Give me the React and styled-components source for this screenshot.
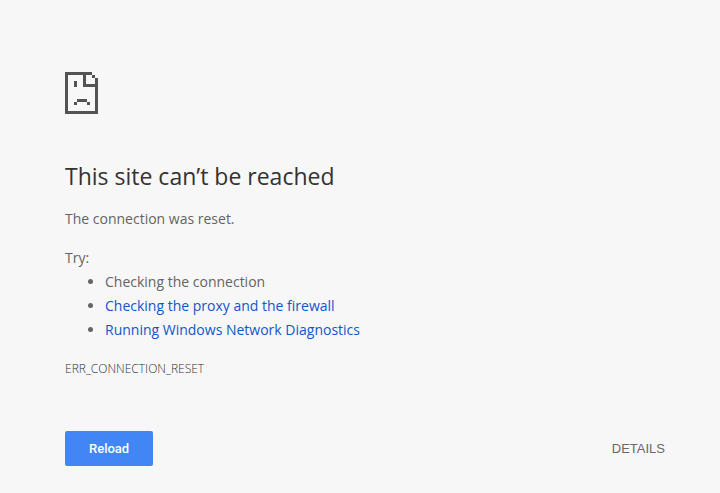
import React from "react";
import styled, { createGlobalStyle } from "styled-components";

const GlobalStyle = createGlobalStyle`
  body {
    margin: 0;
    background-color: #f7f7f7;
    color: #646464;
    font-family: "Segoe UI", "Open Sans", sans-serif;
    font-size: 14px;
    line-height: 24px;
  }
`;

const Page = styled.main`
  box-sizing: border-box;
  padding: 72px 0 24px 10px;
`;

const Content = styled.div`
  max-width: 600px;
  margin: 0 auto;
`;

const SadPage = styled.svg`
  display: block;
  width: 33px;
  height: 42px;
  margin-bottom: 48px;
  fill: #535353;
`;

const Title = styled.h1`
  margin: 0 0 16px;
  color: #333;
  font-size: 23px;
  font-weight: 400;
  line-height: 29px;
`;

const Text = styled.p`
  margin: 0;
`;

const Suggestions = styled.div`
  margin: 15px 0;
`;

const List = styled.ul`
  margin: 0;
  padding-left: 40px;
`;

const Link = styled.a`
  color: #1155cc;
  text-decoration: none;
`;

const ErrorCode = styled.div`
  color: #333;
  font-size: 12px;
  font-weight: 300;
`;

const Actions = styled.div`
  display: flex;
  align-items: center;
  justify-content: space-between;
  margin-top: 50px;
`;

const Button = styled.button`
  height: 35px;
  padding: 0 24px;
  border: 0;
  border-radius: 2px;
  background-color: #4285f4;
  color: #fff;
  font-family: Roboto, sans-serif;
  font-size: 13px;
  font-weight: 500;
  cursor: pointer;
`;

const DetailsButton = styled(Button)`
  padding: 0;
  background: none;
  color: #696969;
  font-family: "Liberation Sans", Arial, sans-serif;
  font-weight: 400;
`;

const App = () => {
  return (
    <>
      <GlobalStyle />
      <Page>
        <Content>
          <SadPage
            viewBox="0 0 33 42"
            shapeRendering="crispEdges"
            aria-hidden="true"
          >
            {/* sheet with folded corner */}
            <path d="M0 0h27v3h-6v9h9V6h3v36H0zM3 3v36h27V15H18V3z" fillRule="evenodd" />
            <path d="M27 3h3v3h-3z" />
            {/* eye and mouth */}
            <path d="M9 9h3v6H9zM12 27h10v3H12zM9 30h3v3H9zM22 30h3v3h-3z" />
          </SadPage>

          <Title>This site can’t be reached</Title>
          <Text>The connection was reset.</Text>

          <Suggestions>
            <Text>Try:</Text>
            <List>
              <li>Checking the connection</li>
              <li>
                <Link href="#proxy">Checking the proxy and the firewall</Link>
              </li>
              <li>
                <Link href="#diagnostics">
                  Running Windows Network Diagnostics
                </Link>
              </li>
            </List>
          </Suggestions>

          <ErrorCode>ERR_CONNECTION_RESET</ErrorCode>

          <Actions>
            <Button type="button">Reload</Button>
            <DetailsButton type="button">DETAILS</DetailsButton>
          </Actions>
        </Content>
      </Page>
    </>
  );
};

export default App;
